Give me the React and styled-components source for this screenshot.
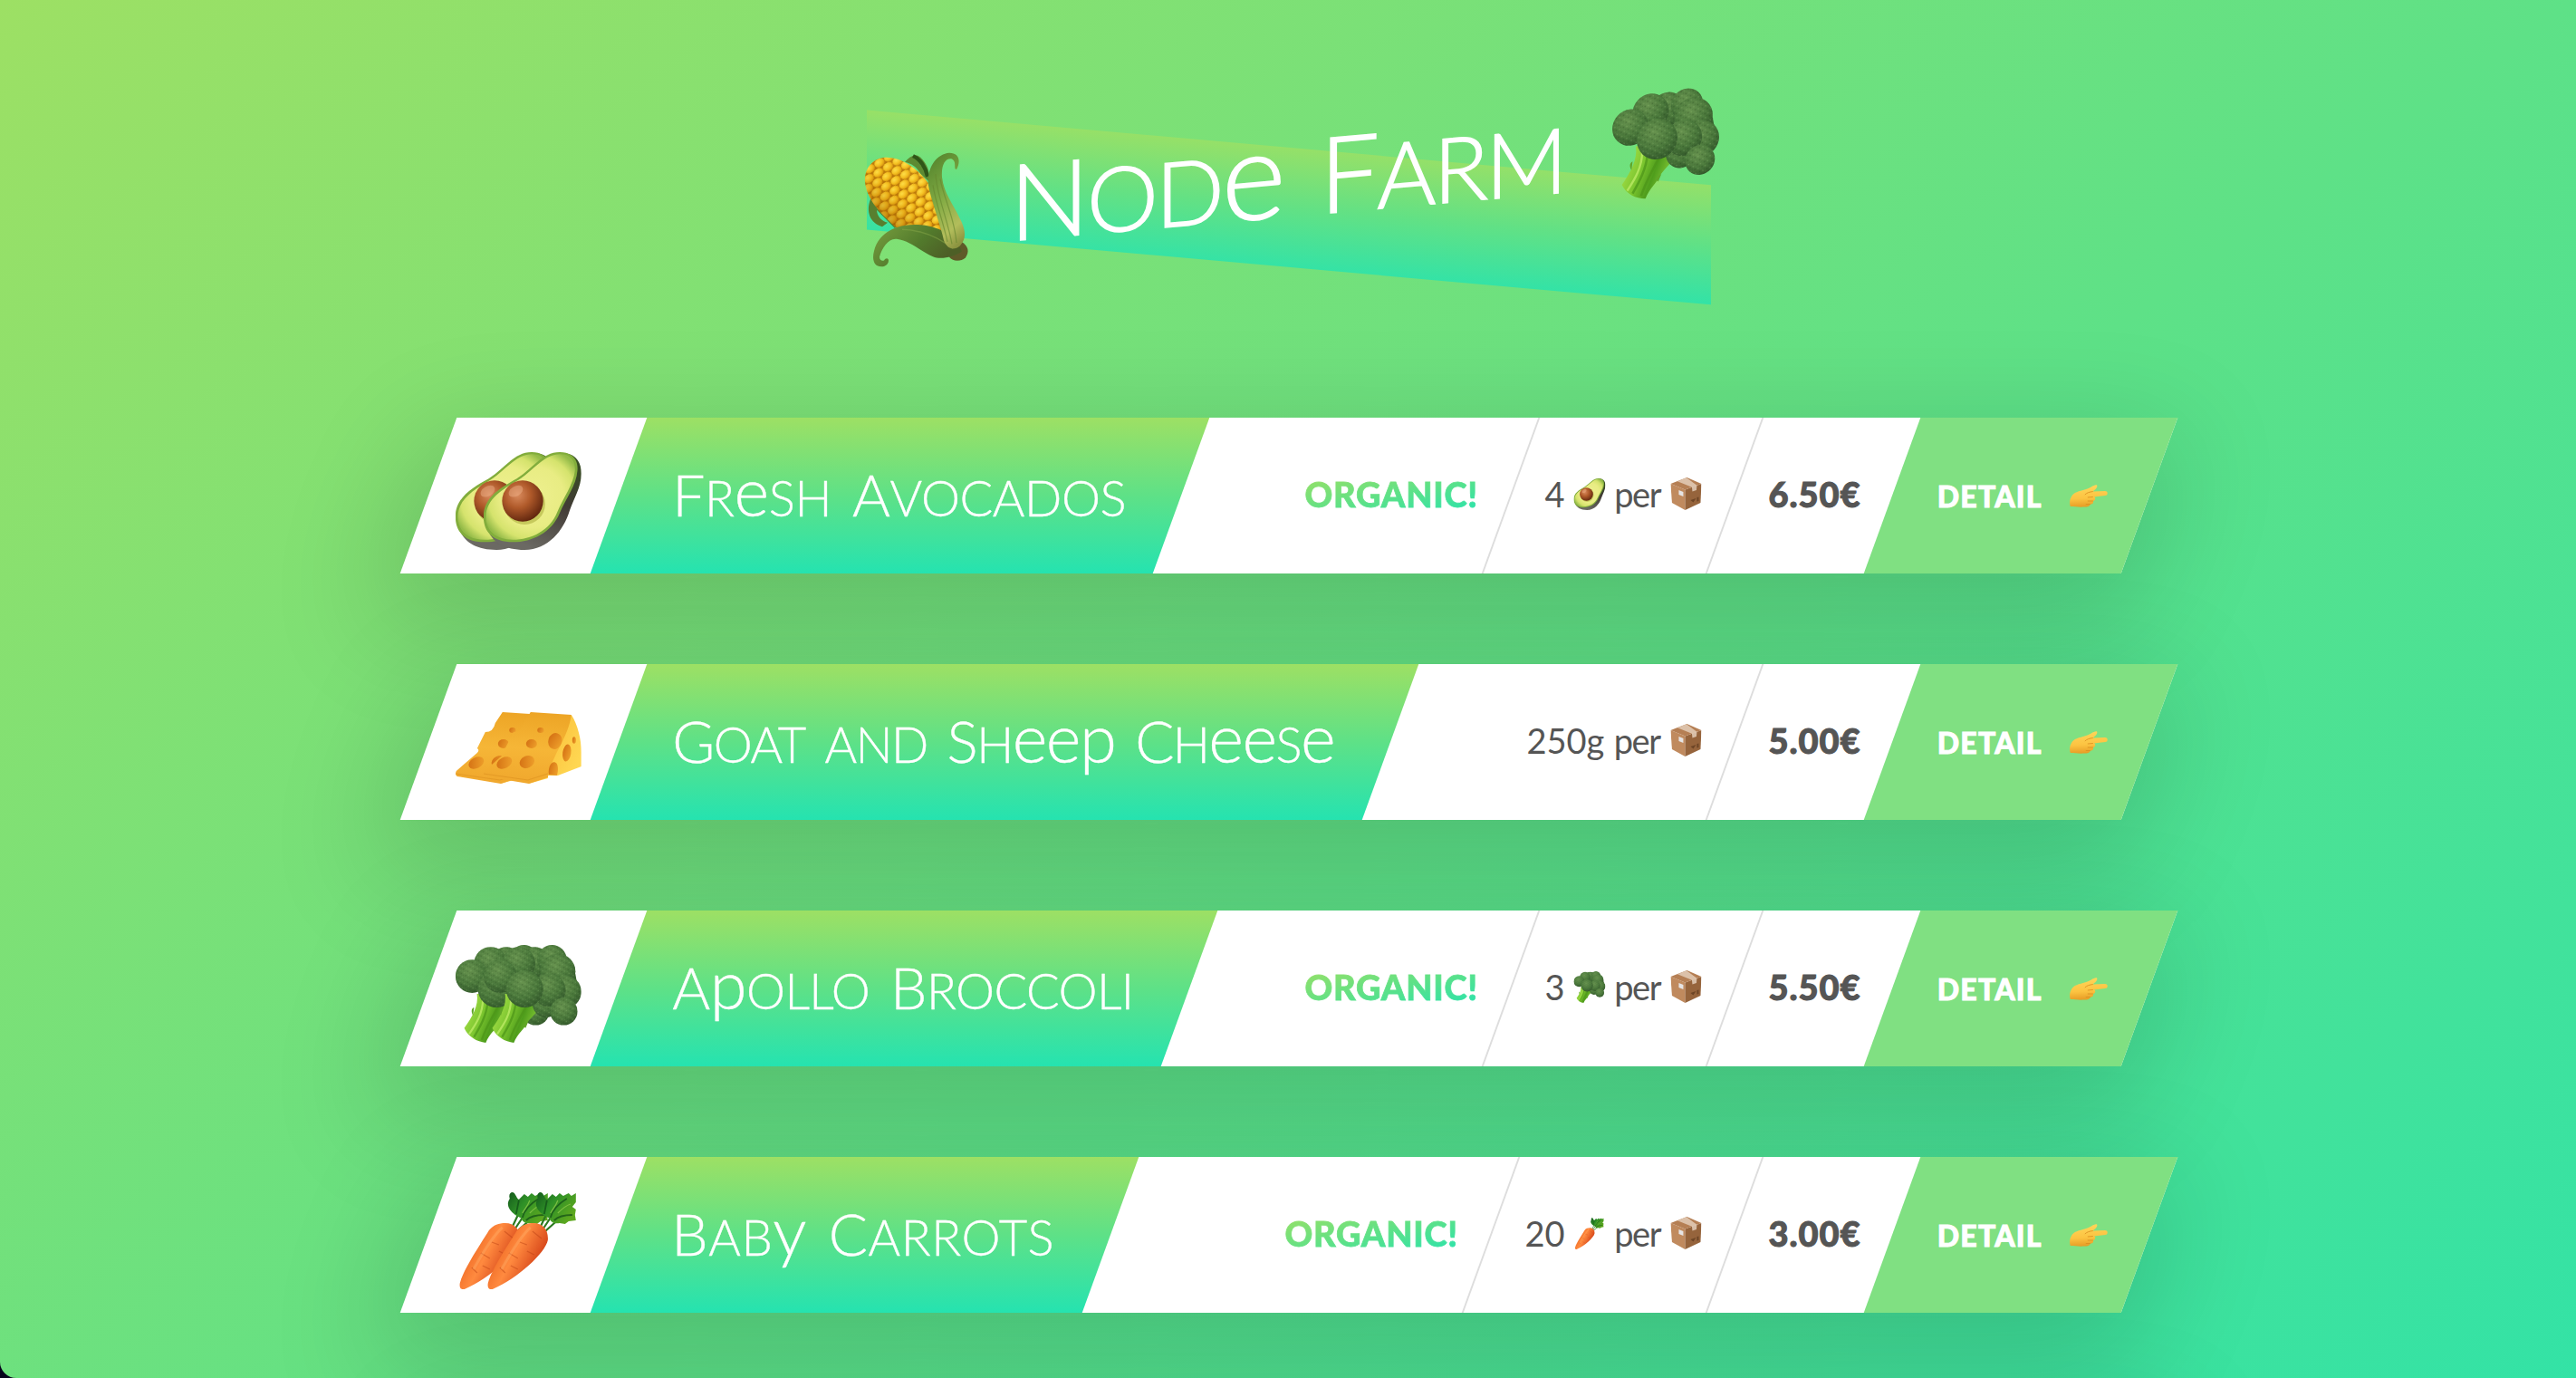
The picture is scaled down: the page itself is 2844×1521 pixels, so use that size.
import React, { useLayoutEffect, useRef } from "react";
import styled, { createGlobalStyle } from "styled-components";

const LIME = "#9de064";
const GREEN = "#5ee187";
const TEAL = "#25e3b0";
const SANS = `"Lato", "Noto Sans", sans-serif`;

const GlobalStyle = createGlobalStyle`
  * { box-sizing: border-box; margin: 0; padding: 0; }
  html { background: #06031c; }
  body { margin: 0; font-family: ${SANS}; color: #555; }
`;

const Page = styled.main`
  height: 1521px;
  overflow: hidden;
  padding-top: 100px;
  border-bottom-left-radius: 18px;
  background: linear-gradient(to bottom right, ${LIME}, ${GREEN}, ${TEAL}) 0 0 / 100% 2021px no-repeat;
`;

const Heading = styled.h1`
  position: relative;
  z-index: 0;
  height: 204px;
  display: flex;
  align-items: center;
  justify-content: center;
  padding: 0 0 15px 8px;
  color: #fff;
  font-size: 117px;
  font-weight: 300;
  line-height: 1;
  -webkit-text-stroke: 1.6px #fff;
  transform: skewY(-5deg);

  &::before {
    content: "";
    position: absolute;
    z-index: -1;
    top: 63px;
    left: 957px;
    width: 932px;
    height: 132px;
    opacity: 0.8;
    background: linear-gradient(to bottom, ${LIME}, ${GREEN}, ${TEAL});
    transform: skewY(10deg);
  }
`;

const HeadingText = styled.span`
  margin: 0 49px 0 44px;
`;

const CardList = styled.div`
  width: 1900px;
  margin: 157px auto 0;
  padding-left: 1px;
  display: flex;
  flex-direction: column;
  gap: 100px;
`;

const Card = styled.figure`
  width: 1900px;
  height: 172px;
  display: flex;
  background: #fff;
  box-shadow: 0 40px 120px 20px rgba(0, 0, 0, 0.15);
  transform: skewX(-20deg);
`;

const EmojiBox = styled.div`
  width: 210px;
  display: flex;
  align-items: center;
  justify-content: center;
  padding: 12px 8px 0 0;
`;

const EmojiPair = styled.div`
  display: flex;
  transform: skewX(20deg);
  & > svg + svg { margin-left: -77px; }
`;

const TitleBox = styled.div`
  width: ${(p) => p.$width}px;
  margin-right: auto;
  display: flex;
  align-items: center;
  padding: 0 0 3px ${(p) => p.$indent}px;
  background: linear-gradient(to bottom, ${LIME}, ${GREEN}, ${TEAL});
`;

const Title = styled.h2`
  color: #fff;
  font-size: 64px;
  font-weight: 300;
  line-height: 1;
  -webkit-text-stroke: 0.4px #fff;
  transform: skewX(20deg);
`;

const Fitted = styled.span`
  display: inline-block;
  white-space: pre;
`;

const Glyph = styled.span`
  font-size: ${(p) => p.$size}em;
  line-height: 0;
  text-transform: ${(p) => (p.$upper ? "uppercase" : "none")};
`;

const Detail = styled.div`
  display: flex;
  align-items: center;
  padding: 0 36px 2px;
  border-right: ${(p) => (p.$last ? "none" : "2px solid #ddd")};
`;

const DetailText = styled.p`
  display: flex;
  align-items: center;
  font-size: 38px;
  line-height: 1.2;
  transform: skewX(20deg);
  & > svg { margin-bottom: 1px; }
`;

const Organic = styled(DetailText)`
  font-weight: 900;
  text-transform: uppercase;
  color: transparent;
  -webkit-text-stroke: 0.8px transparent;
  background: linear-gradient(to right bottom, ${LIME}, ${GREEN}, ${TEAL});
  background-clip: text;
  -webkit-background-clip: text;
`;

const Price = styled(DetailText)`
  font-weight: 900;
  -webkit-text-stroke: 1px #555;
`;

const Link = styled.a`
  width: 284px;
  display: flex;
  align-items: center;
  padding-left: 50px;
  background: #80e082;
`;

const LinkText = styled.span`
  display: flex;
  align-items: center;
  gap: 31px;
  color: #fff;
  font-size: 32px;
  font-weight: 900;
  text-transform: uppercase;
  -webkit-text-stroke: 0.9px #fff;
  transform: skewX(20deg);
`;

const SharedDefs = styled.svg`
  position: absolute;
  width: 0;
  height: 0;
`;

/* Spreads its text over an exact width by adjusting the tracking. */
function Fit({ width, text, children }) {
  const ref = useRef(null);
  useLayoutEffect(() => {
    const el = ref.current;
    el.style.letterSpacing = "0px";
    el.style.marginRight = "0px";
    const gap = (width - el.offsetWidth) / (text.length - 1);
    el.style.letterSpacing = `${gap}px`;
    el.style.marginRight = `${-gap}px`;
  }, [width, text]);
  return <Fitted ref={ref}>{children || text}</Fitted>;
}

/* Display lettering: tall initials, shorter capitals, rounded e, p and y. */
function Display({ text, width }) {
  return (
    <Fit width={width} text={text}>
      {text.split("").map((c, i) => {
        if (c === " ") return <Glyph key={i} $size={1.35}>{c}</Glyph>;
        if (/[epy]/.test(c)) return <Glyph key={i} $size={1.16}>{c}</Glyph>;
        if (/[a-z]/.test(c)) return <Glyph key={i} $size={0.85} $upper>{c}</Glyph>;
        return <Glyph key={i} $size={1}>{c}</Glyph>;
      })}
    </Fit>
  );
}

function Defs() {
  return (
    <SharedDefs aria-hidden="true">
      <defs>
        <radialGradient id="floret" cx="0.42" cy="0.32" r="0.7">
          <stop offset="0" stopColor="#66924e" />
          <stop offset="0.6" stopColor="#4a783b" />
          <stop offset="1" stopColor="#33592b" />
        </radialGradient>
        <pattern id="speckle" width="5" height="5" patternUnits="userSpaceOnUse" patternTransform="rotate(27)">
          <circle cx="1" cy="1.2" r="0.7" fill="#9cc47c" opacity="0.3" />
          <circle cx="3.6" cy="3.2" r="0.8" fill="#1f3d18" opacity="0.3" />
          <circle cx="3.4" cy="0.6" r="0.5" fill="#86b268" opacity="0.3" />
          <circle cx="1.2" cy="3.8" r="0.5" fill="#1f3d18" opacity="0.25" />
        </pattern>
        <linearGradient id="stalk" x1="0" y1="0.3" x2="1" y2="0.7">
          <stop offset="0" stopColor="#a8e04a" />
          <stop offset="0.35" stopColor="#7cc62f" />
          <stop offset="0.6" stopColor="#4f9d1c" />
          <stop offset="1" stopColor="#9bdc43" />
        </linearGradient>
        <radialGradient id="flesh" cx="0.52" cy="0.5" r="0.6">
          <stop offset="0" stopColor="#eef08f" />
          <stop offset="0.6" stopColor="#e8ec83" />
          <stop offset="0.82" stopColor="#d5e36d" />
          <stop offset="1" stopColor="#94bb48" />
        </radialGradient>
        <linearGradient id="skin" x1="1" y1="0" x2="0.5" y2="1">
          <stop offset="0" stopColor="#35521f" />
          <stop offset="0.5" stopColor="#413b35" />
          <stop offset="1" stopColor="#6b6963" />
        </linearGradient>
        <radialGradient id="seed" cx="0.38" cy="0.35" r="0.7">
          <stop offset="0" stopColor="#d98b5e" />
          <stop offset="0.45" stopColor="#b05a2a" />
          <stop offset="1" stopColor="#5d230d" />
        </radialGradient>
        <linearGradient id="rind" x1="0.5" y1="0" x2="0.4" y2="1">
          <stop offset="0" stopColor="#eda526" />
          <stop offset="0.5" stopColor="#f6b637" />
          <stop offset="1" stopColor="#f0a72d" />
        </linearGradient>
        <linearGradient id="cut" x1="0" y1="0" x2="1" y2="0.6">
          <stop offset="0" stopColor="#f7b42e" />
          <stop offset="1" stopColor="#ffd752" />
        </linearGradient>
        <linearGradient id="hole" x1="0" y1="0" x2="1" y2="0.4">
          <stop offset="0" stopColor="#d26d12" />
          <stop offset="1" stopColor="#eb9a28" />
        </linearGradient>
        <linearGradient id="carrotBody" x1="0.15" y1="0.35" x2="0.75" y2="0.7">
          <stop offset="0" stopColor="#ee6a25" />
          <stop offset="0.45" stopColor="#ff8a3f" />
          <stop offset="1" stopColor="#d94a1c" />
        </linearGradient>
        <linearGradient id="frond" x1="0" y1="0" x2="1" y2="0.6">
          <stop offset="0" stopColor="#14591c" />
          <stop offset="0.45" stopColor="#2f9127" />
          <stop offset="1" stopColor="#5ea81f" />
        </linearGradient>
        <radialGradient id="kernel" cx="0.4" cy="0.35" r="0.65">
          <stop offset="0" stopColor="#ffe24a" />
          <stop offset="0.6" stopColor="#f6c01f" />
          <stop offset="1" stopColor="#d9960f" />
        </radialGradient>
        <pattern id="kernels" width="12" height="18" patternUnits="userSpaceOnUse" patternTransform="rotate(-28)">
          <rect width="12" height="18" fill="#b87408" />
          <ellipse cx="6" cy="4.5" rx="5.8" ry="4.8" fill="url(#kernel)" />
          <ellipse cx="0" cy="13.5" rx="5.8" ry="4.8" fill="url(#kernel)" />
          <ellipse cx="12" cy="13.5" rx="5.8" ry="4.8" fill="url(#kernel)" />
        </pattern>
        <linearGradient id="cobshade" x1="0.75" y1="0.2" x2="0.25" y2="0.75">
          <stop offset="0" stopColor="#fff06a" stopOpacity="0.12" />
          <stop offset="0.55" stopColor="#c88008" stopOpacity="0.05" />
          <stop offset="1" stopColor="#8a4a00" stopOpacity="0.4" />
        </linearGradient>
        <linearGradient id="huskLight" x1="0.4" y1="0" x2="0.7" y2="1">
          <stop offset="0" stopColor="#5a8a30" />
          <stop offset="0.45" stopColor="#84ac45" />
          <stop offset="0.8" stopColor="#b2bd5b" />
          <stop offset="1" stopColor="#8c9440" />
        </linearGradient>
        <linearGradient id="huskDark" x1="0.1" y1="0.3" x2="0.9" y2="0.7">
          <stop offset="0" stopColor="#6b9238" />
          <stop offset="0.5" stopColor="#527a2c" />
          <stop offset="1" stopColor="#4d5f26" />
        </linearGradient>
        <linearGradient id="palm" x1="0.4" y1="0" x2="0.5" y2="1">
          <stop offset="0" stopColor="#ffd65a" />
          <stop offset="0.6" stopColor="#fcc341" />
          <stop offset="1" stopColor="#e59a24" />
        </linearGradient>
      </defs>
    </SharedDefs>
  );
}

const FLORETS = [
  [52, 18, 16], [70, 15, 15], [36, 19, 17], [64, 60, 14], [17, 32, 17],
  [76, 27, 18], [83, 48, 17], [67, 46, 17], [82, 68, 14], [42, 45, 19],
];

const STALK = "M22 50 C24 62 17 74 9 85 C13 94 22 99 31 100 C35 90 42 86 45 79 C49 73 57 68 59 61 L50 50 Z";

function Broccoli({ size }) {
  return (
    <svg width={size} height={size} viewBox="0 0 100 100">
      <path d={STALK} fill="url(#stalk)" />
      <path d="M33 58 C32 72 25 84 19 94 M45 60 C38 74 31 84 27 97" stroke="#4c9418" strokeWidth="2.2" fill="none" opacity="0.7" />
      <path d="M28 56 C28 70 21 81 14 91" stroke="#c5f06c" strokeWidth="2" fill="none" opacity="0.7" />
      <path d="M19 64 C16 65 16 69 18 72 Z M40 82 L46 78 L43 85 Z" fill="#61a528" />
      <path d="M22 14 L48 3 L80 6 L94 30 L98 52 L84 70 L58 66 L24 46 Z" fill="#3a632f" />
      {FLORETS.map(([x, y, r], i) => (
        <g key={i}>
          <circle cx={x} cy={y} r={r} fill="url(#floret)" />
          <circle cx={x} cy={y} r={r} fill="url(#speckle)" />
        </g>
      ))}
    </svg>
  );
}

function Avocado({ size }) {
  return (
    <svg width={size} height={size} viewBox="0 0 100 100">
      <path d="M80 1 C93 1 100 9 100 22 C100 36 92 48 88 60 C82 80 66 100 42 100 C22 100 8 92 4 78 L60 10 Z" fill="url(#skin)" />
      <path d="M78 0 C91 0 97 8 96 19 C95 34 84 48 78 62 C70 82 50 92 30 92 C10 92 0 82 0 66 C0 46 18 36 34 27 C50 17 60 0 78 0 Z" fill="#82ad3c" />
      <path d="M78 2 C89 2 94 9 93.500 19 C92 33 81.500 47 75.500 61 C68 80 49 89.500 30 89.500 C12 89.500 2.500 80 2.500 66 C2.500 48 20 38 35 29 C51 19 62 2 78 2 Z" fill="url(#flesh)" />
      <ellipse cx="42" cy="53" rx="21" ry="21" fill="#b6b94a" opacity="0.7" />
      <ellipse cx="40" cy="50" rx="21" ry="21" fill="url(#seed)" />
      <ellipse cx="33" cy="40" rx="8" ry="5" fill="#f0b48c" opacity="0.45" transform="rotate(-30 33 40)" />
    </svg>
  );
}

function Cheese({ size }) {
  return (
    <svg width={size} height={size} viewBox="0 0 108 108">
      <g transform="translate(0 15)">
        <path d="M97 3 C104 14 108 30 108 44 L108 60 L82 70 L71 70 L71 73 L50 79 Z" fill="url(#cut)" />
        <path d="M52 0 L97 3 C93 30 76 46 71 72 L50 79 L2 71 Q-1 69 1 65 L24 45 Q27 42 24 40 L33 22 Q42 22 44 12 Z" fill="url(#rind)" />
        <path d="M0 68 L49 75 L71 68" stroke="#dc9120" strokeWidth="1.2" fill="none" opacity="0.6" />
        <ellipse cx="79" cy="32" rx="7.500" ry="9" fill="url(#hole)" transform="rotate(18 79 32)" />
        <ellipse cx="92" cy="45" rx="4.600" ry="9.500" fill="url(#hole)" transform="rotate(8 92 45)" />
        <ellipse cx="100" cy="31" rx="2" ry="3.800" fill="url(#hole)" />
        <path d="M72 69 C71 58 77 52 81 57 C83 62 82 66 81 70 Z" fill="url(#hole)" />
        <ellipse cx="63" cy="20" rx="3.600" ry="3" fill="url(#hole)" />
        <ellipse cx="53" cy="35" rx="6" ry="5" fill="url(#hole)" />
        <ellipse cx="48" cy="55" rx="8.500" ry="6.500" fill="url(#hole)" transform="rotate(-25 48 55)" />
        <ellipse cx="23" cy="56" rx="9" ry="6" fill="url(#hole)" transform="rotate(-28 23 56)" />
      </g>
    </svg>
  );
}

function Carrot({ size }) {
  return (
    <svg width={size} height={size} viewBox="-4 0 108 108">
      <path d="M60 44 L72 26 M63 45 L82 28 M57 43 L66 24" stroke="#2b7a20" strokeWidth="2.2" fill="none" />
      <path d="M62 26 C54 20 52 14 56 8 C54 3 58 -1 61 2 C64 6 64 8 66 9 L72 3 L76 6 L80 2 L84 5 L90 2 L93 5 L98 2 L98 12 L94 17 L98 20 L97 26 L98 32 L90 33 L86 36 L80 35 C74 36 70 34 69 30 Z" fill="url(#frond)" />
      <path d="M66 10 L63 25 M88 8 C78 14 72 20 70 29 M94 26 C86 26 78 28 74 32" stroke="#0f4a17" strokeWidth="1.800" fill="none" opacity="0.7" />
      <path d="M78 10 C76 16 72 20 70 24 M92 14 C86 16 82 20 78 24" stroke="#8bc84a" strokeWidth="1.200" fill="none" opacity="0.8" />
      <path d="M51 35 C62 35 68 43 67 54 C64 68 34 96 6 108 C2 109 0 106 1 101 C6 84 24 58 33 43 C38 37 44 35 51 35 Z" fill="url(#carrotBody)" />
      <path d="M50 44 L60 52 M36 56 L44 59 M44 66 L52 70 M24 68 L34 74 M26 82 L34 86 M14 84 L20 90" stroke="#b93e12" strokeWidth="1.300" fill="none" opacity="0.45" />
      <path d="M48 40 C38 48 26 68 16 86" stroke="#ffb06a" strokeWidth="3" fill="none" opacity="0.4" />
    </svg>
  );
}

function Corn() {
  return (
    <svg width="116" height="122" viewBox="0 0 116 122">
      <path d="M45 8 C50 2 57 -1 62 4 C70 12 73 22 72 32 L62 22 C58 14 52 10 45 8 Z" fill="#5d8a32" />
      <path d="M54 2 C62 6 68 16 70 26" stroke="#2f5518" strokeWidth="4" fill="none" />
      <path d="M7 46 C2 58 6 72 20 77 L26 73 C19 71 14 64 14 58 L34 80 L40 74 L18 44 Z" fill="#587f2f" />
      <path d="M21 1 C8 2 0 12 1 26 C3 46 18 62 36 80 C44 88 70 88 86 88 L78 46 C70 26 44 0 21 1 Z" fill="url(#kernels)" />
      <path d="M21 1 C8 2 0 12 1 26 C3 46 18 62 36 80 C44 88 70 88 86 88 L78 46 C70 26 44 0 21 1 Z" fill="url(#cobshade)" />
      <path d="M107 101 C116 107 116 114 112 119 C106 124 98 122 94 117 L98 104 Z" fill="#5f5a28" />
      <path d="M37 79 C50 76 74 78 90 90 C98 95 104 103 108 112 C98 118 84 119 76 115 C60 106 50 95 36 92 C27 90 20 100 17 110 C17 115 22 116 23 113 C28 110 29 119 22 121 C12 122 8 114 11 103 C14 90 24 82 37 79 Z" fill="url(#huskDark)" />
      <path d="M42 82 C60 84 80 92 98 108" stroke="#86a548" strokeWidth="1.500" fill="none" opacity="0.5" />
      <path d="M102 21 C98 20 103 13 97 9 C90 7 85 14 86 28 C88 46 98 58 106 76 C113 90 113 100 104 107 C98 110 91 107 88 98 C84 80 74 52 71 36 C69 16 80 2 94 2 C105 3 107 12 102 21 Z" fill="url(#huskLight)" />
      <path d="M79 24 C80 48 92 74 97 103 M84 30 C88 52 100 74 102 102 M76 36 C79 56 88 80 92 100" stroke="#64852f" strokeWidth="1.200" fill="none" opacity="0.6" />
    </svg>
  );
}

function Package() {
  return (
    <svg width="34" height="36" viewBox="0 0 34 36">
      <path d="M0 7 L16 13.500 L16 36 L1.500 28 Z" fill="#c08a5e" />
      <path d="M34 7 L16 13.500 L16 36 L33 28 Z" fill="#96643c" />
      <path d="M18 0 L34 7 L16 13.500 L0 7 Z" fill="#b57f54" />
      <path d="M13 2 L17.500 0.300 L29 8.800 L28.500 14 L24 15.500 L23.500 10.800 L7.500 4.300 L11 3 Z" fill="#e3cdb8" opacity="0.85" />
      <path d="M9 14 L14 16 L14 21 L9 19 Z" fill="#e6e4e4" />
      <path d="M22 25 L28 23 L25 27.500 Z M29 22 L31 21.500 L31 26 L29 26.500 Z" fill="#6d4526" />
    </svg>
  );
}

function Hand() {
  return (
    <svg width="42" height="25" viewBox="0 0 42 25">
      <path d="M1 24 C-1 19 1 12 6 9 C11 6.500 19 5.500 24 2.500 C27 0.500 31 -1 30.500 2 C30 4.500 27 6 26 7.500 L39 7 C43 7 43 11.500 39.500 12 L27 13.500 C29.500 14.500 28.500 17.500 26 18 C27 20.500 25 21.500 23 21.500 C22.500 24 20 24.500 16 24.500 C11 25 5 24 1 24 Z" fill="url(#palm)" />
      <path d="M26 13.500 L20 14 M26 18 L20 18 M23 21.500 L18 21.500 M26 7.500 C22 8 19 9 17 11" stroke="#d98c1e" strokeWidth="1" fill="none" opacity="0.8" />
    </svg>
  );
}

const CARDS = [
  { name: "Fresh Avocados", nameWidth: 501, boxWidth: 621, indent: 59, icon: Avocado, organic: true, count: "4", price: "6.50€", content: 173 },
  { name: "Goat and Sheep Cheese", nameWidth: 732, boxWidth: 852, indent: 59, icon: Cheese, organic: false, count: "250g", price: "5.00€", content: 193 },
  { name: "Apollo Broccoli", nameWidth: 510, boxWidth: 630, indent: 59, icon: Broccoli, organic: true, count: "3", price: "5.50€", content: 173 },
  { name: "Baby Carrots", nameWidth: 422, boxWidth: 543, indent: 58, icon: Carrot, organic: true, count: "20", price: "3.00€", content: 195 },
];

const Quantity = styled(DetailText)`
  width: ${(p) => p.$width}px;
  justify-content: space-between;
`;

function ProductCard({ item }) {
  const Icon = item.icon;
  const small = item.name.includes("Cheese") ? null : <Icon size={35} />;
  return (
    <Card>
      <EmojiBox>
        <EmojiPair>
          <Icon size={108} />
          <Icon size={108} />
        </EmojiPair>
      </EmojiBox>
      <TitleBox $width={item.boxWidth} $indent={item.indent}>
        <Title><Display text={item.name} width={item.nameWidth} /></Title>
      </TitleBox>
      {item.organic && (
        <Detail>
          <Organic><Fit width={191} text="Organic!" /></Organic>
        </Detail>
      )}
      <Detail>
        <Quantity $width={item.content}>
          <span>{item.count}</span>
          {small}
          <Fit width={52} text="per" />
          <Package />
        </Quantity>
      </Detail>
      <Detail $last>
        <Price><Fit width={101} text={item.price} /></Price>
      </Detail>
      <Link>
        <LinkText>
          <Fit width={115} text="Detail" />
          <Hand />
        </LinkText>
      </Link>
    </Card>
  );
}

export default function App() {
  return (
    <>
      <GlobalStyle />
      <Defs />
      <Page>
        <Heading>
          <Corn />
          <HeadingText><Display text="Node Farm" width={616} /></HeadingText>
          <Broccoli size={118} />
        </Heading>
        <CardList>
          {CARDS.map((item) => <ProductCard key={item.name} item={item} />)}
          {/* Next card starts below the fold; only its shadow reaches the page. */}
          <Card />
        </CardList>
      </Page>
    </>
  );
}
